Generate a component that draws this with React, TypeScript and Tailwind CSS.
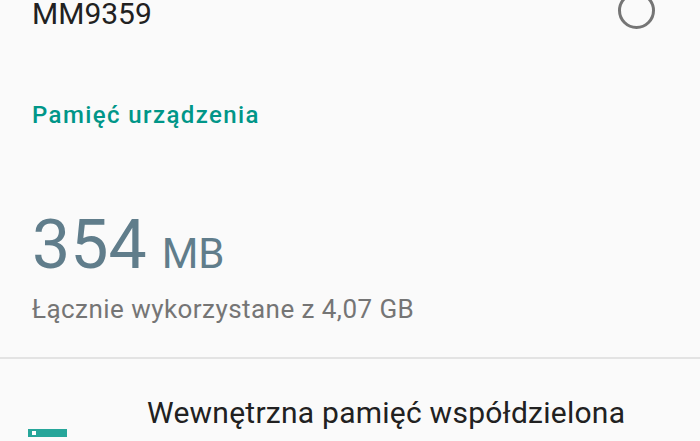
export default function App() {
  return (
    <div className="w-[700px] h-[441px] overflow-hidden bg-[#fafafa] font-['Roboto',sans-serif]">
      <div className="flex items-start justify-between pl-8 pr-[45px]">
        <div className="text-[30px] leading-none text-[#212121] -mt-[1px]">MM9359</div>
        <div className="w-[37px] h-[37px] rounded-full border-[3.5px] border-[#757575] -mt-[8px]" />
      </div>

      <div className="pl-8 mt-[74px] text-[24px] leading-none font-medium tracking-[1.4px] text-[#009688]">Pamięć urządzenia</div>

      <div className="pl-8 mt-[84px] flex items-baseline text-[#607d8b]">
        <span className="text-[68px] leading-none">354</span>
        <span className="text-[42px] leading-none ml-[15px]">MB</span>
      </div>

      <div className="pl-8 mt-[17px] text-[26px] leading-none tracking-[0.45px] text-[#757575]">Łącznie wykorzystane z 4,07 GB</div>

      <div className="mt-[35px] h-[2px] bg-[#e3e3e3]" />

      <div className="flex items-start mt-[39px]">
        <div className="w-[147px] shrink-0 pl-[28px] pt-[31px]">
          <div className="w-[39px] h-[8px] bg-[#26a69a] flex items-center pl-[4px]">
            <div className="w-[4px] h-[4px] bg-white" />
          </div>
        </div>
        <div className="text-[30px] leading-none tracking-[0.25px] text-[#212121] whitespace-nowrap">Wewnętrzna pamięć współdzielona</div>
      </div>
    </div>
  );
}
